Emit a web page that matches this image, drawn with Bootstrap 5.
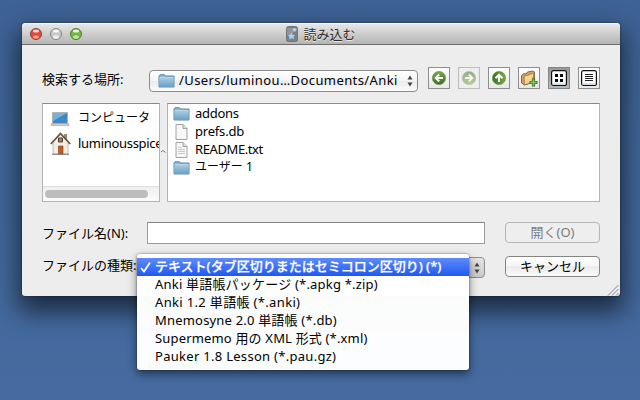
<!DOCTYPE html>
<html lang="ja">
<head>
<meta charset="utf-8">
<title>読み込む</title>
<link href="https://cdn.jsdelivr.net/npm/bootstrap@5.3.0/dist/css/bootstrap.min.css" rel="stylesheet">
<style>
body{width:640px;height:400px;background:linear-gradient(#3e6294,#41669a 50%,#456ba0);font:13px/18px "Noto Sans","Noto Sans CJK JP",sans-serif;color:#000}
svg{display:block;flex:none}
.win{width:598px;height:273px;margin:23px 0 0 22px;background:#ededed;border-radius:4px 4px 3px 3px;box-shadow:0 12px 24px 4px rgba(0,0,0,.58),0 0 2px rgba(0,0,0,.6)}
.titlebar{height:22px;background:linear-gradient(#e9e9e9,#b4b4b4);border-bottom:1px solid #6e6e6e;border-radius:4px 4px 0 0;box-shadow:inset 0 1px #f6f6f6;color:#2c2c2c;text-shadow:0 1px #e8e8e8}
.ttl{margin-left:1px}
.lights{left:8px;top:5px}
.pane{padding:22px 20px 0}
.lookin{height:24px}
.popup{height:22px;border:1px solid #8d8d8d;border-radius:4px;background:linear-gradient(#fff,#f4f4f4 49%,#ebebeb 50%,#fbfbfb);white-space:nowrap}
.path-popup{width:269px;margin:3px 10px 0 0;padding:0 4px 0 8px}
.tool{width:22px;height:22px;border:1px solid #8e8e8e;background:linear-gradient(#fff,#e8e8e8)}
.tool.off{border-color:#bdbdbd;background:#eee}.tool.off svg{opacity:.5}
.tool.on{background:linear-gradient(#989898,#b8b8b8);border-color:#858585}
.lists{height:99px;margin-top:12px}
.well{background:#fff;border:1px solid #b4b4b4;border-top-color:#8b8b8b;overflow:hidden;white-space:nowrap}
.places{width:118px}
.place{padding-left:7px;height:26px;gap:7px}
.place span,.file span{margin-top:-2px}
.hbar{height:15px;border-top:1px solid #dedede;background:linear-gradient(#efefef,#fcfcfc);padding:3px 2px}
.thumb{width:103px;height:8px;border-radius:4px;background:#bdbdbd}
.grip{width:7px;padding-top:46px;padding-left:1px}
.file{height:18px;padding-left:5px;gap:5px}
.fieldrow{height:34px}
.lbl{width:105px;white-space:nowrap}
.txt{width:338px;height:22px;background:#fff;border:1px solid #9b9b9b;border-top-color:#828282}
.push{width:95px;height:21px;margin-left:20px;border:1px solid #858585;border-radius:4px;background:linear-gradient(#fff,#f5f5f5 49%,#ebebeb 50%,#fbfbfb);line-height:17px;font-size:13px;padding:0;color:#000}
.push:disabled{border-color:#b5b5b5;background:#eee;color:#7c7c7c;opacity:1}
.type-popup{width:338px;height:21px;background:linear-gradient(#e4e4e4,#c9c9c9);padding-right:4px}
.resize{margin:11px -19px 0 auto}
.menu{left:137px;top:254px;width:332px;height:116px;padding:4px 0;background:rgba(255,255,255,.985);border-radius:3px;box-shadow:0 4px 10px rgba(0,0,0,.5),0 0 2px rgba(0,0,0,.55);white-space:nowrap}
.opt{height:18px;padding-left:18px;line-height:17px}
.opt.sel{background:linear-gradient(#5f8bfb,#1f59f2);color:#fff;padding-left:3px;gap:4px}
.m1{font-weight:500;-webkit-text-stroke:.25px #fff;margin-top:-1px}
.t1{letter-spacing:.41px;margin-top:-2px}
.kata{font-size:12px;padding-left:1px}
.t2{letter-spacing:-.3px}.t3{letter-spacing:-.3px}.t4{letter-spacing:-.2px}.t5{letter-spacing:-.4px}.t6{font-size:12px}
.m2{letter-spacing:.2px}.m3{letter-spacing:.34px}.m4{letter-spacing:.19px}.m5{letter-spacing:.17px}.m6{letter-spacing:.29px}
</style>
<script src="https://cdn.jsdelivr.net/npm/bootstrap@5.3.0/dist/js/bootstrap.bundle.min.js"></script>
</head>
<body class="position-relative overflow-hidden">
<svg width="0" height="0" class="position-absolute"><defs>
<linearGradient id="gf" x2="0" y2="1"><stop stop-color="#a7cbe3"/><stop offset="1" stop-color="#6a9fc5"/></linearGradient>
<linearGradient id="gg" x2="0" y2="1"><stop stop-color="#7aa94a"/><stop offset="1" stop-color="#377020"/></linearGradient>
<symbol id="folder" viewBox="0 0 16 14"><path d="M.5 13V2L1.500.7H6L7 2h8.500v11z" fill="#8bb6d4" stroke="#5e8caf"/><path d="M1 4h14v9H1z" fill="url(#gf)"/><path d="M1 3.500h14" stroke="#bad7e9"/></symbol>
<symbol id="doc" viewBox="0 0 12 16"><path d="M.5.5h7l4 4v11H.5z" fill="#f7f7f7" stroke="#a0a0a0"/><path d="M7.500.5v4h4" fill="#ddd" stroke="#a0a0a0"/></symbol>
<symbol id="arrows" viewBox="0 0 6 12"><path d="M3 .5l2.500 4h-5zM3 11.500L.5 7.500h5z" fill="#444"/></symbol>
<symbol id="ball" viewBox="0 0 14 14"><circle cx="7" cy="7" r="6.600" fill="url(#gg)" stroke="#6f9550" stroke-width=".7"/><path d="M11 7H4M7.200 3.500L3.700 7l3.500 3.500" fill="none" stroke="#fff" stroke-width="2"/></symbol>
</defs></svg>
<div class="d-flex">
<div class="win">
  <div class="titlebar position-relative d-flex justify-content-center align-items-center">
    <svg class="lights position-absolute" width="56" height="12" viewBox="0 0 56 12">
      <circle cx="6" cy="6" r="5.500" fill="#e0483d" stroke="#8c433d"/><ellipse cx="6" cy="3" rx="3" ry="1.500" fill="#fbd5cf"/><ellipse cx="6" cy="9" rx="3" ry="1.800" fill="#ff9382"/>
      <circle cx="26" cy="6" r="5.500" fill="#cacaca" stroke="#858585"/><ellipse cx="26" cy="3" rx="3" ry="1.500" fill="#f6f6f6"/><ellipse cx="26" cy="9" rx="3" ry="1.800" fill="#eee"/>
      <circle cx="46" cy="6" r="5.500" fill="#74b64c" stroke="#4d7d35"/><ellipse cx="46" cy="3" rx="3" ry="1.500" fill="#e3f6d8"/><ellipse cx="46" cy="9" rx="3" ry="1.800" fill="#b9ec91"/>
    </svg>
    <svg width="12" height="16" viewBox="0 0 12 16" class="me-1"><rect x=".5" y=".5" width="11" height="15" rx="2" fill="#7b7e82" stroke="#707274"/><path d="M1 2h10v3L1 9z" fill="#94979a"/><path d="M5.500 6.500l1.200 2.200 2.400.2-1.600 1.900.5 2.500-2.500-1-2.300 1.100.3-2.500L1.800 9l2.500-.4z" fill="#9bd4fa"/><path d="M8.500 1.500l.7 1.300 1.500.1-1 1.200.3 1.400-1.500-.6-1.300.7.1-1.500-1-1.100 1.500-.3z" fill="#a7dafa"/></svg>
    <span class="ttl">読み込む</span>
  </div>
  <div class="pane">
    <div class="lookin d-flex">
      <span class="lbl" style="padding-top:3px;margin-right:2px">検索する場所:</span>
      <div class="popup path-popup d-flex align-items-center">
        <svg width="17" height="14"><use href="#folder"/></svg><span class="t1 ms-1">/Users/luminou…Documents/Anki</span>
        <svg width="6" height="12" class="ms-auto"><use href="#arrows"/></svg>
      </div>
      <div class="d-flex gap-2 tools">
        <div class="tool d-flex align-items-center justify-content-center"><svg width="14" height="14"><use href="#ball"/></svg></div>
        <div class="tool off d-flex align-items-center justify-content-center"><svg width="14" height="14" viewBox="0 0 14 14"><use href="#ball" transform="rotate(180 7 7)" width="14" height="14"/></svg></div>
        <div class="tool d-flex align-items-center justify-content-center"><svg width="14" height="14" viewBox="0 0 14 14"><use href="#ball" transform="rotate(90 7 7)" width="14" height="14"/></svg></div>
        <div class="tool d-flex align-items-center justify-content-center"><svg width="18" height="18" viewBox="0 0 18 18"><path d="M1.500 6.500L4 4.500l2 .5 1.500-2L13 2l1.500 1v10l-10 3L1.500 14z" fill="#d3a05d" stroke="#7d6040" stroke-width=".9"/><path d="M4 7.500L12.500 4.500 14 5l-2 8.500-7.500 2.300z" fill="#fcd38f" stroke="#8c6a43" stroke-width=".7"/><path d="M13.500 9.500v8M9.500 13.500h8" stroke="#376b25" stroke-width="3.200"/><path d="M13.500 10.300v6.400M10.300 13.500h6.400" stroke="#82c95d" stroke-width="1.700"/></svg></div>
        <div class="tool on d-flex align-items-center justify-content-center"><svg width="16" height="16" viewBox="0 0 16 16"><rect x=".6" y=".6" width="14.800" height="14.800" rx="2" fill="#fff" stroke="#111" stroke-width="1.200"/><path d="M1.500 14h13" stroke="#c9e4f7" stroke-width="1.500"/><path d="M4 4h3v3H4zM9 4h3v3H9zM4 9h3v3H4zM9 9h3v3H9z"/></svg></div>
        <div class="tool d-flex align-items-center justify-content-center"><svg width="16" height="16" viewBox="0 0 16 16"><rect x=".6" y=".6" width="14.800" height="14.800" rx="2" fill="#fff" stroke="#111" stroke-width="1.200"/><path d="M1.500 14h13" stroke="#c9e4f7" stroke-width="1.500"/><path d="M4 4.500h8M4 6.500h8M4 8.500h8M4 10.500h8" stroke="#222"/></svg></div>
      </div>
    </div>
    <div class="lists d-flex">
      <div class="well places d-flex flex-column">
        <div class="place d-flex align-items-center" style="padding-top:3px"><svg width="20" height="14" viewBox="0 0 20 14"><path d="M2.500.5h15v11h-15z" fill="#4287c5" stroke="#b3b3b3"/><path d="M3 1h14L3 9z" fill="#76b0dd"/><path d="M1.500 11.500h17l.5 2H1z" fill="#cfcfcf" stroke="#9d9d9d" stroke-width=".6"/></svg><span class="kata">コンピュータ</span></div>
        <div class="place d-flex align-items-center"><svg width="21" height="23" viewBox="0 0 21 23"><path d="M14 2h3v7h-3z" fill="#9b8a76"/><path d="M3 10l7.500-8L18 10v12H3z" fill="#f1eee3" stroke="#aaa398" stroke-width=".7"/><path d="M.8 12L10.500 1.500 20.200 12" fill="none" stroke="#66513e" stroke-width="1.700"/><path d="M8.500 6h4v4h-4z" fill="#83888f" stroke="#5a3c2b"/><path d="M8.500 14h4.500v8H8.500z" fill="#c25b26" stroke="#804020" stroke-width=".6"/><path d="M2 22.300h17" stroke="#777"/></svg><span class="t2" style="margin-top:0">luminousspice</span></div>
        <div class="hbar mt-auto"><div class="thumb"></div></div>
      </div>
      <div class="grip"><svg width="5" height="5" viewBox="0 0 5 5"><path d="M0 3L2 1.500 4.500 3.500" fill="none" stroke="#777"/></svg></div>
      <div class="well flex-grow-1 pt-1 files">
        <div class="file d-flex align-items-center" style="margin-top:-3px"><svg width="17" height="14"><use href="#folder"/></svg><span class="t3">addons</span></div>
        <div class="file d-flex align-items-center"><svg width="17" height="16"><use href="#doc"/></svg><span class="t4">prefs.db</span></div>
        <div class="file d-flex align-items-center"><svg width="17" height="16" viewBox="0 0 17 16"><use href="#doc" width="17" height="16"/><path d="M5 5.500h4M5 7.500h7M5 9.500h7M5 11.500h7" stroke="#bbb" stroke-width=".8"/></svg><span class="t5">README.txt</span></div>
        <div class="file d-flex align-items-center"><svg width="17" height="14"><use href="#folder"/></svg><span class="t6">ユーザー 1</span></div>
      </div>
    </div>
    <div class="fieldrow d-flex" style="margin-top:20px">
      <span class="lbl pt-1" style="margin-top:-2px">ファイル名(N):</span><div class="txt"></div><button class="btn push" disabled>開く(O)</button>
    </div>
    <div class="d-flex">
      <span class="lbl">ファイルの種類:</span><div class="popup type-popup d-flex align-items-center" style="margin-top:1px"><svg width="6" height="12" class="ms-auto"><use href="#arrows"/></svg></div><button class="btn push">キャンセル</button>
    </div>
    <svg class="resize position-relative" style="margin-top:6px" width="12" height="12" viewBox="0 0 12 12"><path d="M1 11.500L11.500 1M5 11.500L11.500 5M9 11.500L11.500 9" stroke="#858585"/></svg>
  </div>
</div>
</div>
<div class="menu position-absolute">
  <div class="opt sel d-flex align-items-center"><svg width="11" height="12" viewBox="0 0 11 12"><path d="M1 7l3 3.500L10 1.500" fill="none" stroke="#fff" stroke-width="1.800"/></svg><span class="m1">テキスト(タブ区切りまたはセミコロン区切り) (*)</span></div>
  <div class="opt"><span class="m2">Anki 単語帳パッケージ (*.apkg *.zip)</span></div>
  <div class="opt"><span class="m3">Anki 1.2 単語帳 (*.anki)</span></div>
  <div class="opt"><span class="m4">Mnemosyne 2.0 単語帳 (*.db)</span></div>
  <div class="opt"><span class="m5">Supermemo 用の XML 形式 (*.xml)</span></div>
  <div class="opt"><span class="m6">Pauker 1.8 Lesson (*.pau.gz)</span></div>
</div>
</body>
</html>
